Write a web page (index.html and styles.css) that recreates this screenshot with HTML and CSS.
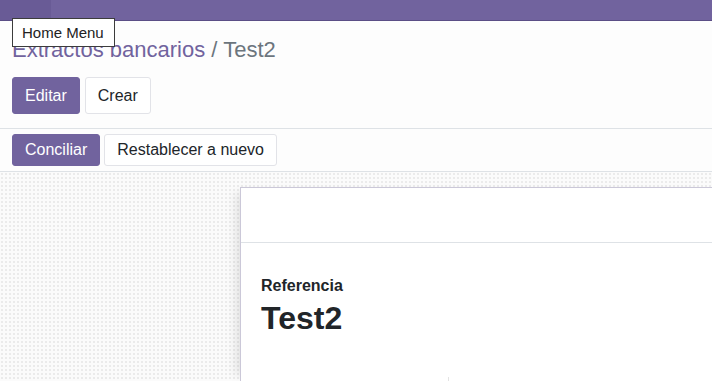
FILE: index.html
```html
<!DOCTYPE html>
<html lang="es">
<head>
    <meta charset="UTF-8">
    <meta name="viewport" content="width=device-width, initial-scale=1.0">
    <title>Extractos bancarios - Test2</title>
    <link rel="stylesheet" href="styles.css">
</head>
<body>
    <header class="navbar">
        <div class="apps-toggle"></div>
    </header>
    <div class="tooltip">Home Menu</div>
    <div class="control-panel">
        <div class="breadcrumb">
            <a href="#" class="crumb-link">Extractos bancarios</a>
            <span class="crumb-sep">/</span>
            <span class="crumb-active">Test2</span>
        </div>
        <div class="cp-buttons">
            <button class="btn btn-primary btn-lg">Editar</button>
            <button class="btn btn-secondary btn-lg">Crear</button>
        </div>
    </div>
    <div class="statusbar">
        <button class="btn btn-primary">Conciliar</button>
        <button class="btn btn-secondary">Restablecer a nuevo</button>
    </div>
    <div class="sheet-bg">
        <div class="sheet">
            <div class="sheet-header"></div>
            <div class="sheet-body">
                <div class="field-label">Referencia</div>
                <h1 class="field-title">Test2</h1>
                <div class="group-row">
                    <div class="group-col"></div>
                    <div class="group-col"></div>
                </div>
            </div>
        </div>
    </div>
</body>
</html>
```

FILE: styles.css
```css
:root { --primary: #71639e; --text: #212529; --muted: #6c757d; --border: #dee2e6; }
* { box-sizing: border-box; }
html, body { height: 100%; }
body { margin: 0; font-family: "Liberation Sans", Arial, sans-serif; background-color: #fdfdfd; color: var(--text); overflow: hidden; display: flex; flex-direction: column; }
.navbar { flex: none; height: 21px; background-color: var(--primary); border-bottom: 1px solid #5b4e86; display: flex; }
.apps-toggle { width: 51px; background-color: #695b96; }
.tooltip { position: absolute; left: 12px; top: 18px; width: 103px; height: 29px; background: #fff; border: 1px solid #3c3c3c; font-size: 15px; line-height: 27px; padding-left: 9px; color: #222; z-index: 10; }
.control-panel { flex: none; padding: 13px 12px 14px; border-bottom: 1px solid var(--border); }
.breadcrumb { font-size: 22px; line-height: 31px; }
.crumb-link { color: var(--primary); text-decoration: none; }
.crumb-sep { color: var(--muted); }
.crumb-active { color: var(--muted); }
.cp-buttons { display: flex; gap: 5px; margin-top: 12px; }
.btn { font-family: inherit; font-size: 16px; border-radius: 3px; border: 1px solid transparent; cursor: pointer; height: 32px; padding: 0 12px; }
.btn-lg { height: 37px; }
.btn-primary { background-color: var(--primary); color: #fff; border-color: var(--primary); }
.btn-secondary { background-color: #fff; color: var(--text); border-color: #e2e3e8; }
.statusbar { flex: none; display: flex; gap: 4px; padding: 5px 12px; border-bottom: 1px solid var(--border); }
.sheet-bg { flex: 1; min-height: 0; padding: 15px 0 0 240px; background-color: #fbfbfb; background-image: radial-gradient(#ebebeb 1px, transparent 1.2px); background-size: 4px 4px; }
.sheet { height: 100%; background: #fff; border: 1px solid #cbc8d8; border-right: none; border-bottom: none; box-shadow: -10px 0 10px -6px rgba(0, 0, 0, 0.1); }
.sheet-header { height: 55px; border-bottom: 1px solid var(--border); }
.sheet-body { padding: 33px 20px 0; }
.field-label { font-size: 16px; font-weight: 700; line-height: 20px; }
.field-title { font-size: 32px; font-weight: 700; margin: 2px 0 0; line-height: 40px; }
.group-row { display: flex; margin-top: 39px; }
.group-col { width: 188px; height: 20px; border-right: 1px solid #e3e3e3; }
.group-col + .group-col { border-right: none; }
```
